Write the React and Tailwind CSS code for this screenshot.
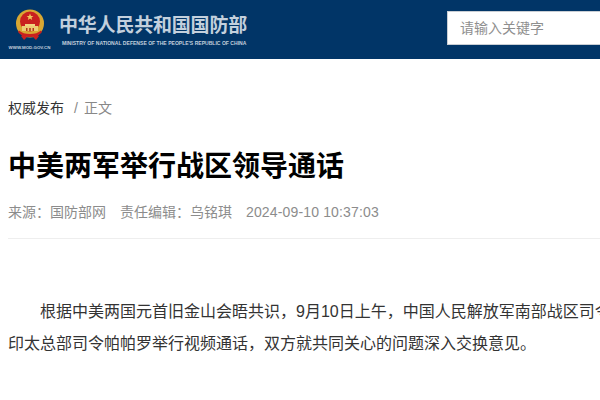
import React from 'react';

const cjk = "font-['Liberation_Sans','Noto_Sans_CJK_SC',sans-serif]";

const Emblem = () => (
    <svg width="30" height="32" viewBox="0 0 30 32" className="block">
        <circle cx="15" cy="14.5" r="14" fill="#d8a733" />
        <circle cx="15" cy="12.5" r="10" fill="#c9201f" />
        <path d="M15 4.5l1 2.4 2.4.1-1.9 1.5.7 2.4-2.2-1.4-2.2 1.4.7-2.4-1.9-1.5 2.4-.1z" fill="#eec95c" />
        <path d="M10 15h10v2H10z" fill="#f0d480" />
        <path d="M7 17h16v5H7z" fill="#eccb73" />
        <path d="M11 19h1.5v3H11zM14.2 19h1.6v3h-1.6zM17.5 19H19v3h-1.5z" fill="#b5321f" />
        <path d="M3 23c3 3.5 6.500 5 12 5s9-1.500 12-5l-1-1.500c-3 2.500-6 3.500-11 3.500s-8-1-11-3.500z" fill="#c9201f" />
        <path d="M6 27l3-2 3 3-3 3zM24 27l-3-2-3 3 3 3z" fill="#c9201f" />
    </svg>
);

const Header = () => (
    <header className="h-[59px] bg-[#013567] flex items-start overflow-hidden">
        <div className="w-[59px] shrink-0 flex flex-col items-center pt-[9px]">
            <Emblem />
            <span className="text-[4.4px] leading-[7px] mt-[3px] font-bold text-[#c6d2de] font-['Liberation_Sans',sans-serif] whitespace-nowrap">WWW.MOD.GOV.CN</span>
        </div>
        <div className="pt-[14px] flex flex-col">
            <span className={`${cjk} text-[19px] leading-[24px] font-bold tracking-[-0.2px] text-[#c3d0dd] whitespace-nowrap`}>中华人民共和国国防部</span>
            <span className="text-[5.07px] leading-[8px] mt-[1px] ml-[3px] font-bold text-[#c3d0dd] font-['Liberation_Sans',sans-serif] whitespace-nowrap">MINISTRY OF NATIONAL DEFENSE OF THE PEOPLE'S REPUBLIC OF CHINA</span>
        </div>
        <div className="ml-[200px] mt-[11px] w-[200px] h-[34px] shrink-0 bg-white border border-[#c9ced4] pl-[12px] flex items-center">
            <span className={`${cjk} text-[14px] text-[#8f8f8f] whitespace-nowrap`}>请输入关键字</span>
        </div>
    </header>
);

const App = () => {
    return (
        <div className={`w-[600px] h-[400px] overflow-hidden bg-white ${cjk}`}>
            <Header />
            <main className="w-[900px] px-2">
                <nav className="mt-[39px] h-[20px] flex items-center text-[14px] leading-[20px] whitespace-nowrap">
                    <span className="text-[#333333]">权威发布</span>
                    <span className="ml-[10px] text-[#888888]">/</span>
                    <span className="ml-[6px] text-[#888888]">正文</span>
                </nav>
                <h1 className="mt-[30px] text-[28px] leading-[38px] font-bold text-black">中美两军举行战区领导通话</h1>
                <div className="mt-[16px] flex text-[14px] leading-[20px] text-[#8c8c8c] whitespace-nowrap">
                    <span>来源：国防部网</span>
                    <span className="ml-[14px]">责任编辑：乌铭琪</span>
                    <span className="ml-[14px] tracking-[0.15px]">2024-09-10 10:37:03</span>
                </div>
                <div className="mt-[16px] border-t border-[#eeeeee]" />
                <p className="mt-[57px] w-[722px] text-[16px] leading-[32px] text-[#333333] indent-[32px]">
                    根据中美两国元首旧金山会晤共识，9月10日上午，中国人民解放军南部战区司令员吴亚男与美军印太总部司令帕帕罗举行视频通话，双方就共同关心的问题深入交换意见。
                </p>
            </main>
        </div>
    );
};

export default App;
